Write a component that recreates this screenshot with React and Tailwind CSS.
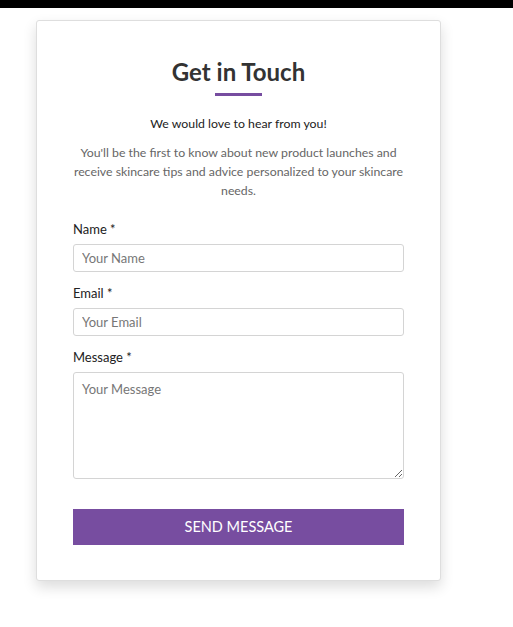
import React from "react";

export default function App() {
  const font = { fontFamily: 'Lato, "Noto Sans", sans-serif' };
  return (
    <div className="min-h-[627px] bg-white" style={font}>
      <div className="h-[8px] bg-black" />
      <div className="pt-[12px] pl-[36px]">
        <div className="w-[405px] bg-white border border-[#dedede] rounded-[3px] shadow-[0_6px_14px_rgba(0,0,0,0.14)] px-[36px] pt-[36px] pb-[35px]">
          <h1 className="text-center text-[24px] leading-[30px] font-bold text-[#333]">Get in Touch</h1>
          <div className="mx-auto mt-[6px] w-[47px] h-[3px] bg-[#774da0]" />
          <p className="mt-[18px] text-center text-[12.3px] leading-[20px] text-[#222]">We would love to hear from you!</p>
          <p className="mt-[9px] -mx-[8px] text-center text-[12.3px] leading-[19px] text-[#666]">
            You'll be the first to know about new product launches and receive skincare tips and advice personalized to your skincare needs.
          </p>
          <form className="mt-[20px]" onSubmit={(e) => e.preventDefault()}>
            <label className="block text-[13px] leading-[18px] text-[#222]">Name *</label>
            <input
              className="mt-[6px] block w-full h-[28px] border border-[#d4d4d4] rounded-[3px] px-[8px] text-[13px] text-[#333] placeholder:text-[#777] outline-none"
              placeholder="Your Name"
            />
            <label className="mt-[12px] block text-[13px] leading-[18px] text-[#222]">Email *</label>
            <input
              className="mt-[6px] block w-full h-[28px] border border-[#d4d4d4] rounded-[3px] px-[8px] text-[13px] text-[#333] placeholder:text-[#777] outline-none"
              placeholder="Your Email"
            />
            <label className="mt-[12px] block text-[13px] leading-[18px] text-[#222]">Message *</label>
            <textarea
              className="mt-[6px] block w-full h-[107px] border border-[#d4d4d4] rounded-[3px] px-[8px] py-[7px] text-[13px] text-[#333] placeholder:text-[#777] outline-none"
              placeholder="Your Message"
            />
            <button
              type="submit"
              className="mt-[30px] block w-full h-[36px] bg-[#774da0] text-white text-[14.5px]"
            >
              SEND MESSAGE
            </button>
          </form>
        </div>
      </div>
    </div>
  );
}
